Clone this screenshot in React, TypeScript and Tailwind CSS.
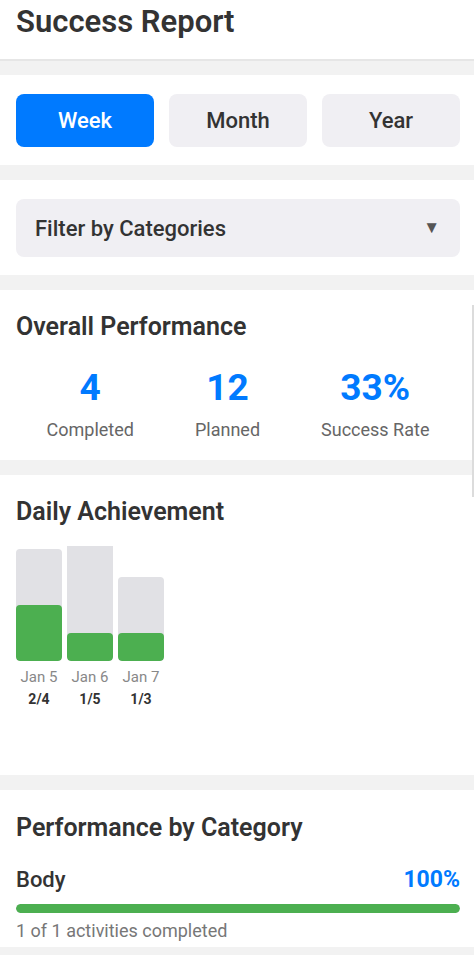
const days = [
  { label: 'Jan 5', done: 2, total: 4 },
  { label: 'Jan 6', done: 1, total: 5 },
  { label: 'Jan 7', done: 1, total: 3 },
];

const stats = [
  { value: '4', label: 'Completed' },
  { value: '12', label: 'Planned' },
  { value: '33%', label: 'Success Rate' },
];

export default function App() {
  return (
    <div
      className="relative min-h-[955px] bg-[#f2f2f2] text-[#333]"
      style={{ fontFamily: 'Roboto, "Noto Sans", Arial, sans-serif' }}
    >
      {/* header */}
      <div className="h-[61px] bg-white border-b-[2px] border-[#e6e6e6] pl-4 pr-[14px] pt-[3px]">
        <h1 className="text-[31px] leading-[38px] font-semibold text-[#333]">Success Report</h1>
      </div>

      {/* period tabs */}
      <div className="mt-[14px] bg-white pl-4 pr-[14px] pt-[19px] pb-[18px]">
        <div className="grid grid-cols-3 gap-[15px]">
          <button className="h-[53px] rounded-lg bg-[#007aff] text-white text-[22px] font-medium">Week</button>
          <button className="h-[53px] rounded-lg bg-[#f0eff3] text-[#333] text-[22px] font-medium">Month</button>
          <button className="h-[53px] rounded-lg bg-[#f0eff3] text-[#333] text-[22px] font-medium">Year</button>
        </div>
      </div>

      {/* filter */}
      <div className="mt-[15px] bg-white pl-4 pr-[14px] pt-[19px] pb-[18px]">
        <div className="h-[58px] rounded-lg bg-[#f0eff3] flex items-center justify-between pl-[19px] pr-[20px]">
          <span className="text-[22px] font-medium text-[#333]">Filter by Categories</span>
          <span className="text-[17px] text-[#555]">▼</span>
        </div>
      </div>

      {/* overall */}
      <div className="mt-[15px] bg-white pl-4 pr-[14px] pt-[21px] h-[170px]">
        <h2 className="text-[25px] leading-[32px] font-semibold">Overall Performance</h2>
        <div className="flex justify-around mt-[22px]">
          {stats.map(s => (
            <div key={s.label} className="flex flex-col items-center">
              <span className="text-[37px] leading-[46px] font-bold text-[#007aff]">{s.value}</span>
              <span className="mt-[7px] text-[18px] leading-[24px] text-[#666]">{s.label}</span>
            </div>
          ))}
        </div>
      </div>

      {/* daily */}
      <div className="mt-[15px] bg-white pl-4 pr-[14px] pt-[21px] h-[300px]">
        <h2 className="text-[25px] leading-[32px] font-semibold">Daily Achievement</h2>
        <div className="flex gap-[5px] mt-[18px]">
          {days.map(d => (
            <div key={d.label} className="w-[46px] flex flex-col items-center">
              <div className="h-[115px] w-full overflow-hidden flex items-end">
                <div
                  className="w-full rounded-[4px] bg-[#e1e1e5] flex items-end overflow-hidden"
                  style={{ height: d.total * 28 }}
                >
                  <div className="w-full rounded-[4px] bg-[#4caf50]" style={{ height: d.done * 28 }} />
                </div>
              </div>
              <span className="mt-[6px] text-[15px] leading-[20px] text-[#888]">{d.label}</span>
              <span className="mt-[2px] text-[14px] leading-[20px] font-bold text-[#333]">{d.done}/{d.total}</span>
            </div>
          ))}
        </div>
      </div>

      {/* category */}
      <div className="mt-[15px] bg-white pl-4 pr-[14px] pt-[22px] pb-[4px]">
        <h2 className="text-[25px] leading-[32px] font-semibold">Performance by Category</h2>
        <div className="flex justify-between items-center mt-[22px]">
          <span className="text-[22px] leading-[28px] font-medium">Body</span>
          <span className="text-[23px] leading-[28px] font-bold text-[#007aff]">100%</span>
        </div>
        <div className="mt-[10px] h-[9px] rounded-full bg-[#e1e1e5] overflow-hidden">
          <div className="h-full w-full rounded-full bg-[#4caf50]" />
        </div>
        <p className="mt-[6px] text-[18px] leading-[24px] text-[#777]">1 of 1 activities completed</p>
      </div>

      {/* scroll indicator */}
      <div className="absolute right-0 top-[305px] h-[192px] w-[2px] bg-[#dcdcdc]" />
    </div>
  );
}
